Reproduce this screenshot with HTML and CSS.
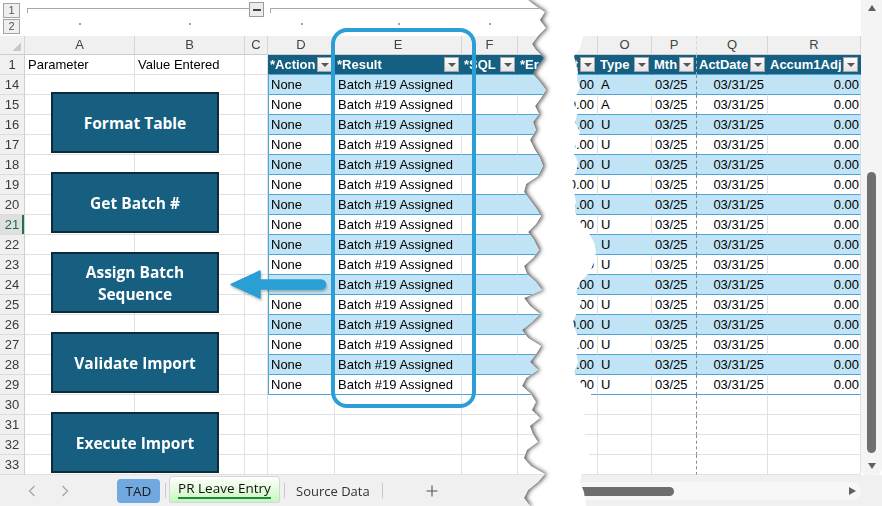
FILE: index.html
```html
<!DOCTYPE html>
<html>
<head>
<meta charset="utf-8">
<link rel="stylesheet" href="styles.css">
</head>
<body>
<div class="lwrap">
  <div class="left">
    <div class="sheet">
      <div class="outline">
        <div class="lvl l1">1</div>
        <div class="brk b-a"><i class="bl"></i><b class="minus"></b></div>
        <div class="brk b-d"><i class="bl"></i></div>
        <div class="lvl l2">2</div>
        <div class="dot"></div><div class="dot"></div><div></div><div class="dot"></div><div class="dot"></div><div class="dot"></div><div></div>
      </div>
      <div class="row ch"><div class="corner"></div><div>A</div><div>B</div><div>C</div><div>D</div><div>E</div><div>F</div><div>G</div></div>
      <div class="row"><div class="rh">1</div><div>Parameter</div><div>Value Entered</div><div></div><div class="th"><span>*Action</span><i class="dd"></i></div><div class="th"><span>*Result</span><i class="dd"></i></div><div class="th"><span>*SQL</span><i class="dd"></i></div><div class="th"><span>*Er</span></div></div>
      <div class="row tb"><div class="rh">14</div><div></div><div></div><div></div><div class="t tf">None</div><div class="t">Batch #19 Assigned</div><div class="t"></div><div class="t"></div></div>
      <div class="row tw"><div class="rh">15</div><div></div><div></div><div></div><div class="t tf">None</div><div class="t">Batch #19 Assigned</div><div class="t"></div><div class="t"></div></div>
      <div class="row tb"><div class="rh">16</div><div></div><div></div><div></div><div class="t tf">None</div><div class="t">Batch #19 Assigned</div><div class="t"></div><div class="t"></div></div>
      <div class="row tw"><div class="rh">17</div><div></div><div></div><div></div><div class="t tf">None</div><div class="t">Batch #19 Assigned</div><div class="t"></div><div class="t"></div></div>
      <div class="row tb"><div class="rh">18</div><div></div><div></div><div></div><div class="t tf">None</div><div class="t">Batch #19 Assigned</div><div class="t"></div><div class="t"></div></div>
      <div class="row tw"><div class="rh">19</div><div></div><div></div><div></div><div class="t tf">None</div><div class="t">Batch #19 Assigned</div><div class="t"></div><div class="t"></div></div>
      <div class="row tb"><div class="rh">20</div><div></div><div></div><div></div><div class="t tf">None</div><div class="t">Batch #19 Assigned</div><div class="t"></div><div class="t"></div></div>
      <div class="row tw"><div class="rh act">21</div><div></div><div></div><div></div><div class="t tf">None</div><div class="t">Batch #19 Assigned</div><div class="t"></div><div class="t"></div></div>
      <div class="row tb"><div class="rh">22</div><div></div><div></div><div></div><div class="t tf">None</div><div class="t">Batch #19 Assigned</div><div class="t"></div><div class="t"></div></div>
      <div class="row tw"><div class="rh">23</div><div></div><div></div><div></div><div class="t tf">None</div><div class="t">Batch #19 Assigned</div><div class="t"></div><div class="t"></div></div>
      <div class="row tb"><div class="rh">24</div><div></div><div></div><div></div><div class="t tf"></div><div class="t">Batch #19 Assigned</div><div class="t"></div><div class="t"></div></div>
      <div class="row tw"><div class="rh">25</div><div></div><div></div><div></div><div class="t tf">None</div><div class="t">Batch #19 Assigned</div><div class="t"></div><div class="t"></div></div>
      <div class="row tb"><div class="rh">26</div><div></div><div></div><div></div><div class="t tf">None</div><div class="t">Batch #19 Assigned</div><div class="t"></div><div class="t"></div></div>
      <div class="row tw"><div class="rh">27</div><div></div><div></div><div></div><div class="t tf">None</div><div class="t">Batch #19 Assigned</div><div class="t"></div><div class="t"></div></div>
      <div class="row tb"><div class="rh">28</div><div></div><div></div><div></div><div class="t tf">None</div><div class="t">Batch #19 Assigned</div><div class="t"></div><div class="t"></div></div>
      <div class="row tw"><div class="rh">29</div><div></div><div></div><div></div><div class="t tf">None</div><div class="t">Batch #19 Assigned</div><div class="t"></div><div class="t"></div></div>
      <div class="row"><div class="rh">30</div><div></div><div></div><div></div><div></div><div></div><div></div><div></div></div>
      <div class="row"><div class="rh">31</div><div></div><div></div><div></div><div></div><div></div><div></div><div></div></div>
      <div class="row"><div class="rh">32</div><div></div><div></div><div></div><div></div><div></div><div></div><div></div></div>
      <div class="row"><div class="rh">33</div><div></div><div></div><div></div><div></div><div></div><div></div><div></div></div>
    </div>
    <div class="tabs">
      <svg class="chev cl" width="8" height="12" viewBox="0 0 8 12"><path d="M6.5 1 L1.5 6 L6.5 11" fill="none" stroke="#a6a6a6" stroke-width="1.3"/></svg>
      <svg class="chev cr" width="8" height="12" viewBox="0 0 8 12"><path d="M1.5 1 L6.5 6 L1.5 11" fill="none" stroke="#a6a6a6" stroke-width="1.3"/></svg>
      <div class="tab-tad">TAD</div>
      <i class="sep s1"></i>
      <div class="tab-pr"><span>PR Leave Entry</span></div>
      <i class="sep s2"></i>
      <div class="tab-src">Source Data</div>
      <i class="sep s3"></i>
      <svg class="plus" width="12" height="12" viewBox="0 0 12 12"><path d="M6 0.5 V11.5 M0.5 6 H11.5" stroke="#555" stroke-width="1.1"/></svg>
    </div>

    <div class="btn b1">Format Table</div>
    <div class="btn b2">Get Batch #</div>
    <div class="btn b3">Assign Batch<br>Sequence</div>
    <div class="btn b4">Validate Import</div>
    <div class="btn b5">Execute Import</div>
    <div class="hl"></div>
    <svg class="arrow" width="100" height="36" viewBox="0 0 100 36">
      <path d="M3 16.5 L32 3 L32 12 L93 12 A4.5 4.5 0 0 1 93 21 L32 21 L32 30 Z" fill="#2a9fd4" stroke="#2a9fd4" stroke-width="1.5" stroke-linejoin="round"/>
    </svg>
  </div>
</div>

<div class="rwrap">
  <div class="right">
    <div class="rtop">
      <div class="rgrid">
        <div class="routline"></div>
        <div class="rrow ch"><div>N</div><div>O</div><div class="pb">P</div><div>Q</div><div>R</div></div>
        <div class="rrow"><div class="th"><span class="clipstart">Amount</span><i class="dd"></i></div><div class="th"><span>Type</span><i class="dd"></i></div><div class="th pb"><span>Mth</span><i class="dd"></i></div><div class="th"><span>ActDate</span><i class="dd"></i></div><div class="th"><span>Accum1Adj</span><i class="dd"></i></div></div>
        <div class="rrow tb"><div class="t num">10.00</div><div class="t">A</div><div class="t pb">03/25</div><div class="t num">03/31/25</div><div class="t num last">0.00</div></div>
        <div class="rrow tw"><div class="t num">10.00</div><div class="t">A</div><div class="t pb">03/25</div><div class="t num">03/31/25</div><div class="t num last">0.00</div></div>
        <div class="rrow tb"><div class="t num">10.00</div><div class="t">U</div><div class="t pb">03/25</div><div class="t num">03/31/25</div><div class="t num last">0.00</div></div>
        <div class="rrow tw"><div class="t num">10.00</div><div class="t">U</div><div class="t pb">03/25</div><div class="t num">03/31/25</div><div class="t num last">0.00</div></div>
        <div class="rrow tb"><div class="t num">10.00</div><div class="t">U</div><div class="t pb">03/25</div><div class="t num">03/31/25</div><div class="t num last">0.00</div></div>
        <div class="rrow tw"><div class="t num">10.00</div><div class="t">U</div><div class="t pb">03/25</div><div class="t num">03/31/25</div><div class="t num last">0.00</div></div>
        <div class="rrow tb"><div class="t num">10.00</div><div class="t">U</div><div class="t pb">03/25</div><div class="t num">03/31/25</div><div class="t num last">0.00</div></div>
        <div class="rrow tw"><div class="t num">10.00</div><div class="t">U</div><div class="t pb">03/25</div><div class="t num">03/31/25</div><div class="t num last">0.00</div></div>
        <div class="rrow tb"><div class="t num">10.00</div><div class="t">U</div><div class="t pb">03/25</div><div class="t num">03/31/25</div><div class="t num last">0.00</div></div>
        <div class="rrow tw"><div class="t num">10.00</div><div class="t">U</div><div class="t pb">03/25</div><div class="t num">03/31/25</div><div class="t num last">0.00</div></div>
        <div class="rrow tb"><div class="t num">10.00</div><div class="t">U</div><div class="t pb">03/25</div><div class="t num">03/31/25</div><div class="t num last">0.00</div></div>
        <div class="rrow tw"><div class="t num">10.00</div><div class="t">U</div><div class="t pb">03/25</div><div class="t num">03/31/25</div><div class="t num last">0.00</div></div>
        <div class="rrow tb"><div class="t num">10.00</div><div class="t">U</div><div class="t pb">03/25</div><div class="t num">03/31/25</div><div class="t num last">0.00</div></div>
        <div class="rrow tw"><div class="t num">10.00</div><div class="t">U</div><div class="t pb">03/25</div><div class="t num">03/31/25</div><div class="t num last">0.00</div></div>
        <div class="rrow tb"><div class="t num">10.00</div><div class="t">U</div><div class="t pb">03/25</div><div class="t num">03/31/25</div><div class="t num last">0.00</div></div>
        <div class="rrow tw"><div class="t num">10.00</div><div class="t">U</div><div class="t pb">03/25</div><div class="t num">03/31/25</div><div class="t num last">0.00</div></div>
        <div class="rrow"><div></div><div></div><div class="pb"></div><div></div><div></div></div>
        <div class="rrow"><div></div><div></div><div class="pb"></div><div></div><div></div></div>
        <div class="rrow"><div></div><div></div><div class="pb"></div><div></div><div></div></div>
        <div class="rrow"><div></div><div></div><div class="pb"></div><div></div><div></div></div>
      </div>
      <div class="vs">
        <i class="tri up"></i>
        <div class="vtrack"><div class="vthumb"></div></div>
        <i class="tri down"></i>
      </div>
    </div>
    <div class="rbar">
      <div class="htrack"><div class="hthumb"></div><i class="tri rt"></i></div>
    </div>
  </div>
</div>
</body>
</html>
```

FILE: styles.css
```css
* { box-sizing: border-box; }
html, body { margin: 0; padding: 0; }
body {
  width: 882px;
  height: 506px;
  overflow: hidden;
  background: #fff;
  font-family: "Liberation Sans", Arial, sans-serif;
  font-size: 13px;
  color: #000;
  display: flex;
  --lc: 25px 110px 110px 23px 67px 127px 56px 60px;
  --rc: 48px 54px 45px 71px 93px;
  --tblue: #c0e4f5;
  --tline: #4ea4d8;
  --thead: #156082;
}

/* ---------- torn panes ---------- */
.lwrap {
  width: 550px;
  flex: none;
  filter: drop-shadow(2px 0 2px rgba(0, 0, 0, 0.65));
}
.left {
  position: relative;
  width: 550px;
  height: 506px;
  overflow: hidden;
  background: #fff;
  clip-path: polygon(0 0, 528px 0, 536px 6px, 545px 12px, 540px 20px, 546px 28px, 538px 36px, 532px 44px, 536px 50px, 544px 58px, 538px 66px, 533px 74px, 540px 82px, 546px 90px, 541px 98px, 535px 106px, 539px 114px, 533px 122px, 536px 130px, 530px 140px, 535px 150px, 540px 158px, 543px 166px, 538px 176px, 526px 184px, 524px 192px, 530px 200px, 536px 208px, 541px 216px, 536px 224px, 528px 232px, 534px 240px, 539px 250px, 533px 258px, 524px 266px, 527px 274px, 536px 282px, 542px 290px, 524px 298px, 530px 306px, 540px 314px, 532px 322px, 522px 330px, 528px 338px, 541px 346px, 536px 354px, 530px 362px, 538px 370px, 526px 378px, 522px 386px, 531px 394px, 536px 402px, 532px 410px, 540px 418px, 530px 426px, 533px 434px, 538px 442px, 527px 450px, 524px 458px, 531px 466px, 545px 474px, 538px 482px, 528px 490px, 524px 498px, 530px 506px, 0 506px);
}
.rwrap { flex: 1; min-width: 0; }
.right {
  height: 506px;
  display: flex;
  flex-direction: column;
  background: #fff;
  clip-path: polygon(38px 0, 100% 0, 100% 506px, 36px 506px, 34px 492px, 30px 482px, 32px 472px, 36px 462px, 40px 452px, 38px 442px, 34px 432px, 30px 422px, 36px 412px, 44px 402px, 40px 392px, 30px 382px, 24px 372px, 28px 362px, 26px 352px, 30px 342px, 26px 332px, 23px 322px, 27px 312px, 32px 302px, 26px 292px, 30px 282px, 40px 272px, 44px 262px, 46px 252px, 44px 242px, 38px 232px, 30px 222px, 25px 212px, 26px 202px, 24px 192px, 22px 182px, 26px 172px, 28px 162px, 23px 152px, 27px 142px, 30px 132px, 25px 122px, 28px 112px, 24px 104px, 26px 96px, 30px 88px, 27px 80px, 28px 72px, 26px 64px, 24px 56px, 30px 48px, 32px 40px, 36px 30px, 40px 20px, 34px 10px);
}

/* ---------- sheet grid ---------- */
.sheet { height: 475px; overflow: hidden; }

.outline {
  display: grid;
  grid-template-columns: var(--lc);
  grid-template-rows: 18px 18px;
  height: 36px;
}
.lvl {
  width: 17px;
  height: 15px;
  margin-left: 3px;
  border: 1px solid #a3a3a3;
  background: #efefef;
  color: #555;
  font-size: 11px;
  line-height: 13px;
  text-align: center;
}
.l1 { margin-top: 3px; }
.l2 { margin-top: 1px; }
.brk { display: flex; padding-left: 2px; }
.b-a { grid-column: 2 / span 3; padding-right: 4px; }
.b-d { grid-column: 5 / span 4; }
.bl {
  flex: 1;
  margin-top: 8px;
  height: 5px;
  border-top: 1px solid #a8a8a8;
  border-left: 1px solid #a8a8a8;
}
.minus {
  flex: none;
  width: 15px;
  height: 15px;
  margin-top: 2px;
  border: 1px solid #9a9a9a;
  background: #ececec;
  display: flex;
  align-items: center;
  justify-content: center;
}
.minus::before { content: ""; width: 8px; height: 2px; background: #444; }
.dot { background: linear-gradient(#a0a0a0, #a0a0a0) no-repeat center 5px / 2px 2px; }

.row {
  display: grid;
  grid-template-columns: var(--lc);
  height: 20px;
}
.rrow {
  display: grid;
  grid-template-columns: var(--rc);
  height: 20px;
}
.row > div, .rrow > div {
  border-right: 1px solid #e1e1e1;
  border-bottom: 1px solid #e1e1e1;
  padding: 0 3px;
  line-height: 19px;
  white-space: nowrap;
  overflow: hidden;
}
.row.ch, .rrow.ch { height: 19px; }
.row.ch > div, .rrow.ch > div {
  background: #f0f0f0;
  color: #444;
  text-align: center;
  line-height: 18px;
  border-right-color: #d6d6d6;
  border-bottom-color: #cdcdcd;
}
.row.ch > .corner {
  background: linear-gradient(to bottom right, transparent 50%, #c9c9c9 50%) no-repeat right 3px bottom 3px / 9px 9px, #f0f0f0;
}
.row > .rh {
  background: #f0f0f0;
  color: #3a3a3a;
  text-align: center;
  padding: 0;
  border-right-color: #cfcfcf;
  border-bottom-color: #dcdcdc;
}
.row > .rh.act {
  background: #dfdfdf;
  color: #1f6b3f;
  box-shadow: inset -2px 0 #217346;
}

.row > .th, .rrow > .th {
  background: var(--thead);
  color: #fff;
  font-weight: bold;
  border-right-color: var(--thead);
  border-bottom-color: var(--tline);
  display: flex;
  align-items: center;
  gap: 2px;
  padding: 0 2px;
}
.th span { flex: 1; min-width: 0; overflow: hidden; }
.th .clipstart { direction: rtl; text-align: right; }
.dd {
  flex: none;
  position: relative;
  width: 15px;
  height: 15px;
  background: linear-gradient(#fdfdfd, #e4e4e4);
  border: 1px solid #a5a5a5;
}
.dd::after {
  content: "";
  position: absolute;
  left: 3px;
  top: 5px;
  border-left: 4px solid transparent;
  border-right: 4px solid transparent;
  border-top: 4px solid #555;
}

.tb > .t { background: var(--tblue); border-right-color: var(--tblue); border-bottom-color: var(--tline); }
.tw > .t { background: #fff; border-bottom-color: var(--tline); border-right-color: #e1e1e1; }
.t.tf { box-shadow: inset 1px 0 var(--tline); }
.num { text-align: right; }
.rrow > .num { padding-right: 3px; }
.rrow > .num.last { padding-right: 1px; }
.rrow > .pb { border-right: 1px dashed #8a8a8a; }
.tb > .t.pb, .tw > .t.pb, .rrow > .th.pb { border-right: 1px dashed #8a8a8a; }
.rrow > .th.pb { border-right-color: #9bb3c2; }

/* ---------- shapes over the sheet ---------- */
.btn {
  position: absolute;
  left: 51px;
  width: 168px;
  height: 61px;
  background: #165f80;
  border: 2.5px solid #0d2a3a;
  color: #fff;
  font-family: "Open Sans", Lato, sans-serif;
  font-weight: 700;
  font-size: 15.5px;
  line-height: 22px;
  display: flex;
  align-items: center;
  justify-content: center;
  text-align: center;
}
.b1 { top: 92px; }
.b2 { top: 172px; }
.b3 { top: 252px; }
.b4 { top: 332px; }
.b5 { top: 412px; }
.hl {
  position: absolute;
  left: 331px;
  top: 28px;
  width: 145px;
  height: 380px;
  border: 4.5px solid #2b9fd5;
  border-radius: 16px;
}
.arrow {
  position: absolute;
  left: 228px;
  top: 268px;
  filter: drop-shadow(1px 2px 1px rgba(0, 0, 0, 0.25));
}

/* ---------- sheet tabs ---------- */
.tabs {
  height: 31px;
  background: #f0f0f0;
  display: flex;
  align-items: center;
  font-family: "Open Sans", "Liberation Sans", sans-serif;
  font-size: 12.5px;
  color: #222;
}
.chev { flex: none; }
.cl { margin-left: 28px; }
.cr { margin-left: 25px; }
.tab-tad {
  margin-left: 48px;
  width: 43px;
  height: 24px;
  border-radius: 4px;
  background: #70a8df;
  color: #1a1a1a;
  text-align: center;
  line-height: 24px;
  font-size: 13.5px;
}
.sep { width: 1px; height: 15px; background: #c9c9c9; flex: none; }
.s1 { margin-left: 5px; }
.tab-pr {
  margin-left: 3px;
  width: 111px;
  height: 27px;
  align-self: flex-end;
  margin-bottom: 3px;
  border: 1px solid #d6d6d6;
  border-radius: 4px 4px 2px 2px;
  background: linear-gradient(#ffffff, #c6f7bd);
  display: flex;
  justify-content: center;
  padding-top: 3px;
  font-size: 13.5px;
  color: #111;
}
.tab-pr span {
  height: 19px;
  border-bottom: 2.5px solid #1b8a3a;
  line-height: 17px;
}
.s2 { margin-left: 4px; }
.tab-src { margin-left: 11px; font-size: 13px; color: #333; }
.s3 { margin-left: 12px; }
.plus { margin-left: 43px; }

/* ---------- right pane ---------- */
.rtop { display: flex; height: 475px; }
.rgrid { width: 311px; flex: none; overflow: hidden; }
.routline { height: 36px; }
.vs {
  width: 21px;
  height: 475px;
  background: #f4f4f4;
  border-radius: 0 0 6px 6px;
  display: flex;
  flex-direction: column;
  align-items: center;
  padding: 5px 0 6px;
}
.tri { flex: none; width: 0; height: 0; }
.up { border-left: 4.5px solid transparent; border-right: 4.5px solid transparent; border-bottom: 6px solid #606060; }
.down { border-left: 4.5px solid transparent; border-right: 4.5px solid transparent; border-top: 6px solid #606060; }
.vtrack {
  flex: 1;
  display: flex;
  flex-direction: column;
  padding: 161px 0 10px;
}
.vthumb { flex: 1; width: 9px; border-radius: 5px; background: #6f6f6f; }
.rbar {
  height: 31px;
  background: #f0f0f0;
  padding: 7px 21px 6px 24px;
}
.htrack {
  height: 18px;
  background: #f7f7f7;
  border-radius: 9px;
  display: flex;
  align-items: center;
  padding: 0 5px 0 0;
}
.hthumb { width: 100px; height: 9px; border-radius: 5px; background: #6d6d6d; }
.rt {
  margin-left: auto;
  border-top: 4.5px solid transparent;
  border-bottom: 4.5px solid transparent;
  border-left: 7px solid #606060;
}
```
